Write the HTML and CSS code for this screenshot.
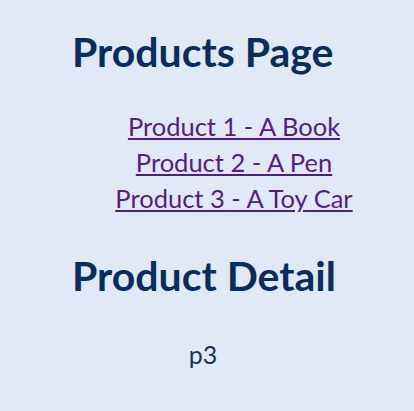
FILE: index.html
```html
<!DOCTYPE html>
<html lang="en">
<head>
<meta charset="utf-8">
<title>Products</title>
<link rel="stylesheet" href="styles.css">
</head>
<body>
<main class="page">
  <h1 class="title">Products Page</h1>
  <ul class="links">
    <li><a href="#p1">Product 1 - A Book</a></li>
    <li><a href="#p2">Product 2 - A Pen</a></li>
    <li><a href="#p3">Product 3 - A Toy Car</a></li>
  </ul>
  <h2 class="title">Product Detail</h2>
  <p class="detail">p3</p>
</main>
</body>
</html>
```
FILE: styles.css
```css
html, body {
  margin: 0;
  padding: 0;
  background: #e1e9f6;
}
body {
  font-family: Lato, "Liberation Sans", sans-serif;
  width: 414px;
  height: 411px;
  overflow: hidden;
}
.page {
  display: flex;
  flex-direction: column;
}
.title {
  margin: 0;
  padding-left: 72px;
  font-size: 41px;
  font-weight: 700;
  line-height: 48px;
  color: #092d5c;
}
.page > h1.title {
  margin-top: 28px;
}
.links {
  list-style: none;
  margin: 32px 0 0;
  padding: 0 0 0 54px;
  text-align: center;
  font-size: 25.5px;
  line-height: 36px;
}
.links a {
  color: #561b8b;
  text-decoration: underline;
}
.page > h2.title {
  margin-top: 36px;
}
.detail {
  margin: 36px 0 0;
  padding-right: 8px;
  text-align: center;
  font-size: 25px;
  line-height: 36px;
  color: #1a3558;
}
```
